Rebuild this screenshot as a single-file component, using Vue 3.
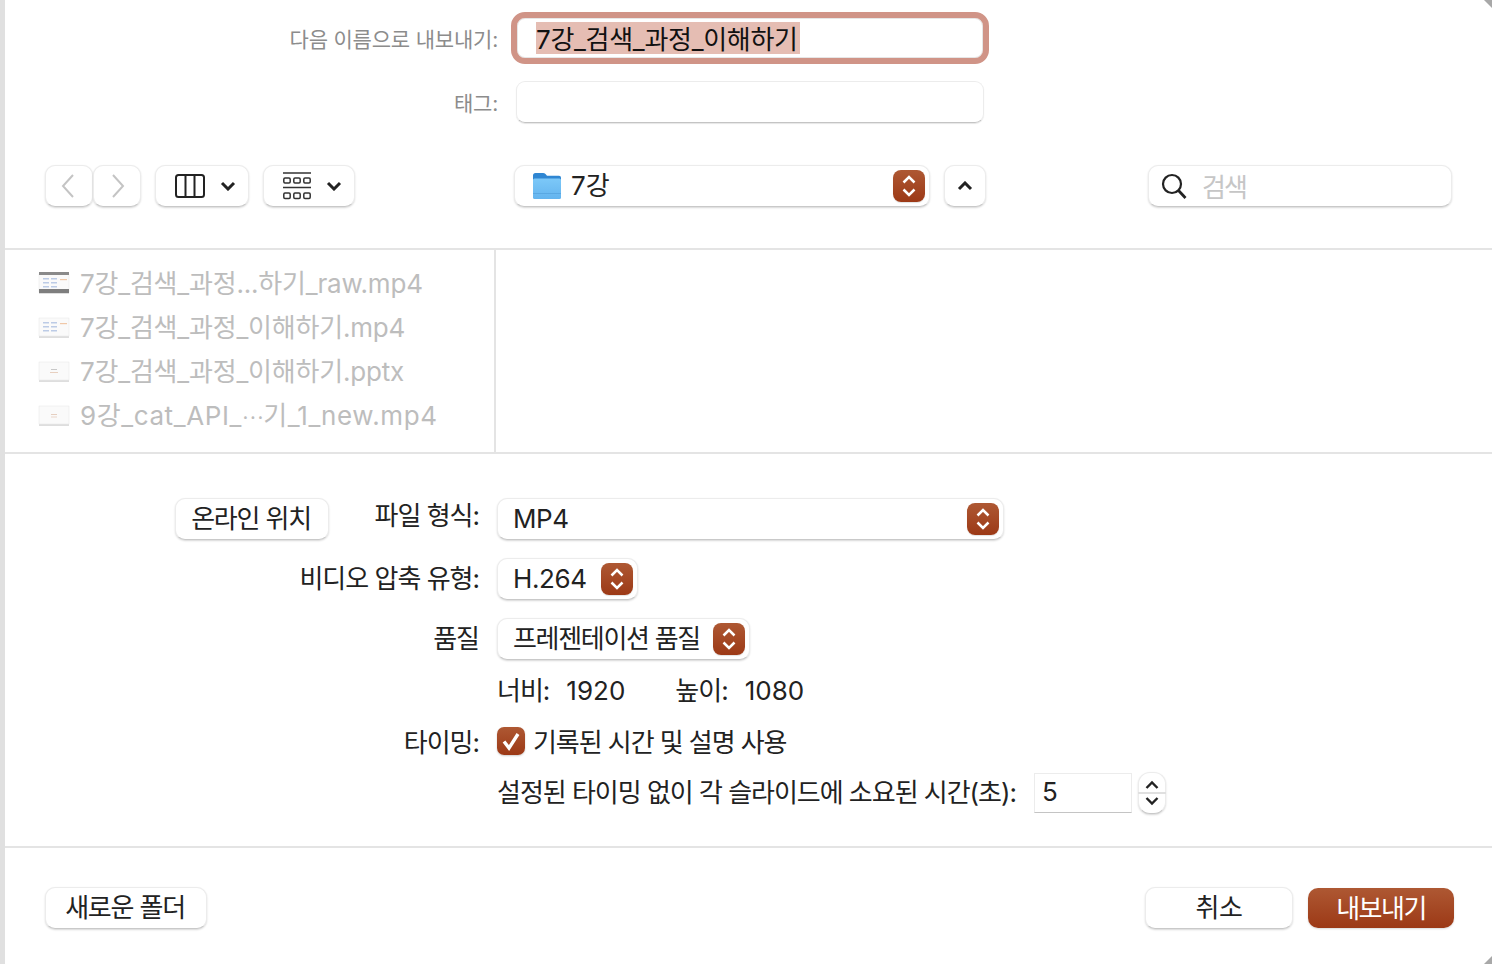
<script setup>
const files = [
  { pre: '7강_검색_과정...하기_raw.mp4', kind: 'raw' },
  { pre: '7강_검색_과정_이해하기.mp4', kind: 'table' },
  { pre: '7강_검색_과정_이해하기.pptx', kind: 'slide' },
  { pre: '9강_cat_API_', mid: '⋯', post: '기_1_new.mp4', kind: 'slide2' },
]
const rowsY = [8, 12, 16]
</script>

<template>
  <div class="dialog">
    <i class="corner top"></i>
    <i class="corner bottom"></i>

    <section class="head">
      <div class="name-row">
        <label class="field-label">다음 이름으로 내보내기:</label>
        <div class="name-input"><span class="selected">7강_검색_과정_이해하기</span></div>
      </div>
      <div class="tag-row">
        <label class="field-label">태그:</label>
        <div class="tag-input"></div>
      </div>
      <div class="toolbar">
        <div class="nav">
          <button class="btn nav-btn back">
            <svg width="16" height="26" viewBox="0 0 16 26"><path d="M13 2 3 13l10 11" fill="none" stroke="#c4c4c4" stroke-width="2"/></svg>
          </button>
          <button class="btn nav-btn fwd">
            <svg width="16" height="26" viewBox="0 0 16 26"><path d="M3 2l10 11L3 24" fill="none" stroke="#c4c4c4" stroke-width="2"/></svg>
          </button>
        </div>
        <button class="btn view-btn">
          <svg width="30" height="24" viewBox="0 0 30 24"><rect x="1" y="1" width="28" height="22" rx="2.500" fill="none" stroke="#222" stroke-width="2"/><path d="M10.500 1v22M19.500 1v22" stroke="#222" stroke-width="2"/></svg>
          <svg class="caret" width="16" height="10" viewBox="0 0 16 10"><path d="M2 2l6 6 6-6" fill="none" stroke="#222" stroke-width="3"/></svg>
        </button>
        <button class="btn group-btn">
          <svg width="28" height="28" viewBox="0 0 28 28">
            <path d="M0 1h28M0 15.500h28" stroke="#333" stroke-width="1.600"/>
            <g fill="none" stroke="#333" stroke-width="1.500">
              <rect x="0.800" y="6" width="6.400" height="5" rx="1.200"/><rect x="10.800" y="6" width="6.400" height="5" rx="1.200"/><rect x="20.800" y="6" width="6.400" height="5" rx="1.200"/>
              <rect x="0.800" y="21" width="6.400" height="5.500" rx="1.200"/><rect x="10.800" y="21" width="6.400" height="5.500" rx="1.200"/><rect x="20.800" y="21" width="6.400" height="5.500" rx="1.200"/>
            </g>
          </svg>
          <svg class="caret" width="16" height="10" viewBox="0 0 16 10"><path d="M2 2l6 6 6-6" fill="none" stroke="#222" stroke-width="3"/></svg>
        </button>
        <div class="btn path-select">
          <svg width="30" height="28" viewBox="0 0 30 28">
            <defs><linearGradient id="fold" x1="0" y1="0" x2="0" y2="1"><stop offset="0" stop-color="#7cc8f8"/><stop offset="1" stop-color="#64b4ee"/></linearGradient></defs>
            <path d="M1 3.500Q1 1 3.500 1h7.500q1.500 0 2.500 1l1.500 1.800H27q2 0 2 2V10H1z" fill="#2f86d2"/>
            <rect x="1" y="6.500" width="28" height="20.500" rx="1.500" fill="url(#fold)"/>
            <path d="M1 21.500h28" stroke="#5aa8e2" stroke-width="1"/>
          </svg>
          <span class="path-name">7강</span>
          <span class="updown">
            <svg width="16" height="24" viewBox="0 0 16 24"><path d="M2.500 8.500 8 3l5.500 5.500M2.500 15.500 8 21l5.500-5.500" fill="none" stroke="#fff" stroke-width="2.500"/></svg>
          </span>
        </div>
        <button class="btn up-btn">
          <svg width="16" height="10" viewBox="0 0 16 10"><path d="M2 8l6-6 6 6" fill="none" stroke="#222" stroke-width="3"/></svg>
        </button>
        <div class="btn search">
          <svg width="26" height="26" viewBox="0 0 26 26"><circle cx="11" cy="11" r="9" fill="none" stroke="#222" stroke-width="2.200"/><path d="M17.500 17.500 24.500 25" stroke="#222" stroke-width="2.800"/></svg>
          <span class="search-text">검색</span>
        </div>
      </div>
    </section>

    <section class="browser">
      <div class="file-pane">
        <div v-for="f in files" :key="f.pre" class="file-row">
          <svg class="thumb" width="32" height="26" viewBox="0 0 32 26">
            <rect x="1" y="6" width="30" height="18" fill="#000" opacity="0.130"/>
            <rect x="1" y="4" width="30" height="18" fill="#fafafa" stroke="#e6e6e6" stroke-width="0.500"/>
            <template v-if="f.kind === 'raw'">
              <rect x="1" y="2" width="30" height="3" fill="#8a8a8a"/>
              <rect x="1" y="19" width="30" height="4" fill="#7e7e7e"/>
            </template>
            <template v-if="f.kind === 'raw' || f.kind === 'table'">
              <g v-for="y in rowsY" :key="y" fill="#bccbe6">
                <rect x="5" :y="y" width="6" height="1.500"/>
                <rect x="13" :y="y" width="6" height="1.500"/>
              </g>
              <rect x="22" y="9" width="7" height="1.200" fill="#f0c8a8"/>
            </template>
            <template v-if="f.kind === 'slide'">
              <rect x="13" y="11" width="6" height="1" fill="#c8c8c8"/>
              <rect x="12" y="14" width="8" height="1" fill="#e8d0c0"/>
            </template>
            <template v-if="f.kind === 'slide2'">
              <rect x="13" y="12" width="6" height="1" fill="#e6cfc0"/>
              <rect x="13" y="14.500" width="6" height="1" fill="#ead6ca"/>
            </template>
          </svg>
          <span class="file-name" :class="{ spaced: f.mid }">{{ f.pre }}<span v-if="f.mid" class="dots">{{ f.mid }}</span>{{ f.post }}</span>
        </div>
      </div>
      <div class="preview-pane"></div>
    </section>

    <section class="options">
      <div class="row">
        <div class="row-label split">
          <button class="btn online-btn">온라인 위치</button>
          <span>파일 형식:</span>
        </div>
        <div class="btn select wide">
          <span class="latin">MP4</span>
          <span class="updown"><svg width="16" height="24" viewBox="0 0 16 24"><path d="M2.500 8.500 8 3l5.500 5.500M2.500 15.500 8 21l5.500-5.500" fill="none" stroke="#fff" stroke-width="2.500"/></svg></span>
        </div>
      </div>
      <div class="row">
        <div class="row-label">비디오 압축 유형:</div>
        <div class="btn select codec">
          <span class="latin">H.264</span>
          <span class="updown"><svg width="16" height="24" viewBox="0 0 16 24"><path d="M2.500 8.500 8 3l5.500 5.500M2.500 15.500 8 21l5.500-5.500" fill="none" stroke="#fff" stroke-width="2.500"/></svg></span>
        </div>
      </div>
      <div class="row">
        <div class="row-label">품질</div>
        <div class="btn select quality">
          <span class="hangul">프레젠테이션 품질</span>
          <span class="updown"><svg width="16" height="24" viewBox="0 0 16 24"><path d="M2.500 8.500 8 3l5.500 5.500M2.500 15.500 8 21l5.500-5.500" fill="none" stroke="#fff" stroke-width="2.500"/></svg></span>
        </div>
      </div>
      <div class="row tight dims-row">
        <div class="row-label"></div>
        <div class="dims">
          <span class="dim"><span class="dim-key">너비:</span><span>1920</span></span>
          <span class="dim"><span class="dim-key">높이:</span><span>1080</span></span>
        </div>
      </div>
      <div class="row tight check-row">
        <div class="row-label timing">타이밍:</div>
        <div class="check-wrap">
          <span class="checkbox"><svg width="22" height="22" viewBox="0 0 22 22"><path d="M4 11.500 9 18 18 4" fill="none" stroke="#fff" stroke-width="3.400"/></svg></span>
          <span class="check-text">기록된 시간 및 설명 사용</span>
        </div>
      </div>
      <div class="row tight seconds-row">
        <div class="row-label"></div>
        <div class="seconds">
          <span class="seconds-label">설정된 타이밍 없이 각 슬라이드에 소요된 시간(초):</span>
          <span class="num-input">5</span>
          <span class="btn stepper">
            <svg width="14" height="10" viewBox="0 0 14 10"><path d="M1.500 8 7 2.500 12.500 8" fill="none" stroke="#222" stroke-width="2.400"/></svg>
            <i class="step-line"></i>
            <svg width="14" height="10" viewBox="0 0 14 10"><path d="M1.500 2 7 7.500 12.500 2" fill="none" stroke="#222" stroke-width="2.400"/></svg>
          </span>
        </div>
      </div>
    </section>

    <footer class="foot">
      <button class="btn foot-btn new-folder">새로운 폴더</button>
      <button class="btn foot-btn cancel">취소</button>
      <button class="foot-btn export">내보내기</button>
    </footer>
  </div>
</template>

<style>
html, body { margin: 0; background: #fff; overflow: hidden; }
</style>

<style scoped>
.dialog {
  position: relative;
  width: 1492px;
  height: 964px;
  box-sizing: border-box;
  border-left: 5px solid #e0e0e0;
  background: #fff;
  overflow: hidden;
  font-family: Inter, "Noto Sans CJK KR", sans-serif;
  font-size: 26px;
  color: #222;
  display: flex;
  flex-direction: column;
}
.corner { position: absolute; right: 0; width: 8px; height: 8px; background: #a8a8a8; }
.corner.top { top: 0; clip-path: polygon(0 0, 100% 0, 100% 100%); }
.corner.bottom { bottom: 0; clip-path: polygon(100% 0, 100% 100%, 0 100%); }

.btn {
  box-sizing: border-box;
  background: #fff;
  border: 1px solid #ececec;
  border-bottom-color: #c9c9c9;
  border-radius: 10px;
  box-shadow: 0 1px 2px rgba(0,0,0,.16);
  font: inherit;
  color: inherit;
  padding: 0;
  display: flex;
  align-items: center;
}

.head { padding-top: 12px; box-sizing: border-box; border-bottom: 2px solid #e4e4e4; height: 250px; }
.name-row, .tag-row { display: flex; align-items: center; }
.field-label {
  width: 493px;
  text-align: right;
  font-size: 21px;
  letter-spacing: -0.2px;
  color: #8c8c8c;
  flex: none;
}
.name-input {
  margin-left: 13px;
  width: 478px;
  height: 52px;
  box-sizing: border-box;
  border: 6px solid #d09487;
  border-radius: 14px;
  padding-left: 19px;
  display: flex;
  align-items: center;
  box-shadow: inset 0 0 0 1px #e6e6e6;
}
.selected { background: #e5bdb3; color: #111; line-height: 36px; height: 32px; white-space: nowrap; letter-spacing: -0.3px; padding-right: 2px; }
.tag-row { margin-top: 17px; }
.tag-input {
  margin-left: 18px;
  width: 468px;
  height: 42px;
  box-sizing: border-box;
  border: 1px solid #ececec;
  border-bottom-color: #c4c4c4;
  border-radius: 9px;
  box-shadow: 0 1px 1px rgba(0,0,0,.1);
}
.toolbar { display: flex; align-items: center; margin-top: 42px; padding-left: 40px; height: 42px; }
.nav { display: flex; }
.nav-btn { width: 48px; height: 42px; justify-content: center; }
.nav-btn.back { padding-right: 3px; }
.nav-btn.fwd { padding-left: 2px; }
.view-btn { width: 94px; height: 42px; margin-left: 14px; padding-left: 19px; }
.group-btn { width: 92px; height: 42px; margin-left: 14px; padding-left: 19px; }
.caret { margin-left: 15px; }
.path-select { width: 416px; height: 42px; margin-left: 159px; padding-left: 17px; padding-right: 4px; }
.path-name { margin-left: 9px; flex: 1; margin-top: -6px; }
.updown {
  width: 32px;
  height: 32px;
  border-radius: 8px;
  background: linear-gradient(#ae5833, #9c3916);
  display: flex;
  align-items: center;
  justify-content: center;
  flex: none;
  box-shadow: 0 1px 1px rgba(0,0,0,.12);
}
.up-btn { width: 42px; height: 42px; margin-left: 14px; justify-content: center; }
.search { width: 304px; height: 42px; margin-left: 162px; padding-left: 12px; }
.search-text { margin-left: 15px; color: #c6c6c6; letter-spacing: -2px; margin-top: -2px; }

.browser { display: flex; height: 204px; box-sizing: border-box; border-bottom: 2px solid #e4e4e4; }
.file-pane {
  width: 491px;
  box-sizing: border-box;
  border-right: 2px solid #e4e4e4;
  padding: 11px 0 0 33px;
}
.file-row { height: 44px; display: flex; align-items: center; }
.thumb { flex: none; filter: blur(0.3px); }
.file-name { margin-left: 10px; margin-top: -4px; color: #bdbdbd; white-space: nowrap; letter-spacing: -0.2px; }
.file-name.spaced { letter-spacing: 0.6px; }
.dots { font-family: "Noto Sans CJK KR", sans-serif; font-size: 20px; letter-spacing: 0; position: relative; top: -6px; }
.preview-pane { flex: 1; }

.options { height: 394px; box-sizing: border-box; padding-top: 44px; border-bottom: 2px solid #e4e4e4; }
.row { display: grid; grid-template-columns: 305px 1fr; column-gap: 17px; margin-left: 170px; align-items: center; height: 42px; }
.row + .row { margin-top: 18px; }
.row.tight { margin-top: 10px; }
.dims-row, .seconds-row { height: 40px; }
.row-label { text-align: right; white-space: nowrap; margin-top: -6px; letter-spacing: -1px; padding-right: 1px; }
.row-label.timing { margin-top: -2px; }
.row-label.split { display: flex; justify-content: space-between; align-items: center; margin-top: 0; }
.row-label.split span { margin-top: -12px; }
.online-btn { width: 154px; height: 42px; justify-content: center; padding: 0 2px 6px 0; letter-spacing: -1.2px; }
.select { height: 42px; padding-left: 15px; padding-right: 4px; justify-content: space-between; white-space: nowrap; }
.select.wide { width: 507px; }
.select.codec { width: 141px; }
.select.quality { width: 253px; }
.latin { letter-spacing: -0.4px; margin-top: -2px; }
.hangul { letter-spacing: -1.3px; margin-top: -6px; }
.dims { display: flex; gap: 50px; margin-top: -4px; }
.dim { display: inline-flex; gap: 17px; align-items: baseline; }
.dim-key { letter-spacing: -1px; }
.check-wrap { display: flex; align-items: center; gap: 8px; }
.check-text { margin-top: -2px; letter-spacing: -1.07px; white-space: nowrap; }
.checkbox {
  width: 28px;
  height: 28px;
  border-radius: 7px;
  background: linear-gradient(#ae5833, #9c3916);
  display: flex;
  align-items: center;
  justify-content: center;
  box-shadow: 0 1px 2px rgba(0,0,0,.2);
}
.seconds { display: flex; align-items: center; }
.seconds-label { white-space: nowrap; letter-spacing: -1.03px; margin-top: -6px; }
.num-input {
  margin-left: 18px;
  width: 98px;
  height: 40px;
  box-sizing: border-box;
  border: 1px solid #ececec;
  border-bottom-color: #c4c4c4;
  padding-left: 7px;
  line-height: 36px;
  flex: none;
}
.stepper {
  margin-left: 6px;
  width: 28px;
  height: 42px;
  flex-direction: column;
  justify-content: space-between;
  padding: 7px 0;
  border-radius: 12px;
  flex: none;
}
.step-line { width: 28px; height: 2px; background: #e0e0e0; flex: none; }

.foot { display: flex; padding: 39px 38px 0 40px; align-items: flex-start; }
.foot-btn { height: 42px; justify-content: center; padding: 0 0 6px; }
.new-folder { width: 162px; letter-spacing: -1.2px; padding-right: 2px; }
.cancel { width: 148px; margin-left: auto; letter-spacing: -0.5px; }
.export {
  width: 146px;
  height: 40px;
  margin-top: 1px;
  margin-left: 15px;
  border: 0;
  border-radius: 10px;
  background: linear-gradient(#ae5833, #9c3916);
  color: #fff;
  font: inherit;
  letter-spacing: -1.5px;
  padding-bottom: 10px;
  box-shadow: 0 1px 2px rgba(0,0,0,.15);
}
</style>
